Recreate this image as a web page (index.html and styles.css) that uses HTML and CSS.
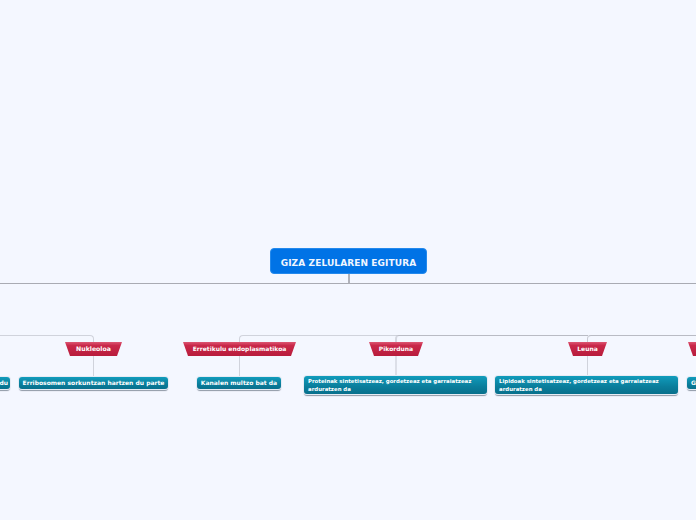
FILE: index.html
```html
<!DOCTYPE html>
<html lang="eu">
<head>
<meta charset="utf-8">
<title>Giza zelularen egitura</title>
<link rel="stylesheet" href="styles.css">
</head>
<body>
<main class="map">
  <div class="line trunk"></div>
  <div class="line stem"></div>
  <div class="line branch branch-left"></div>
  <div class="line branch branch-right-a"></div>
  <div class="line branch branch-right-b"></div>
  <div class="line branch branch-right-c"></div>
  <div class="line drop drop-1"></div>
  <div class="line drop drop-2"></div>
  <div class="line drop drop-3"></div>
  <div class="line drop drop-4"></div>

  <div class="root">GIZA ZELULAREN EGITURA</div>

  <div class="topic t-nukleoloa">Nukleoloa</div>
  <div class="topic t-erretikulu">Erretikulu endoplasmatikoa</div>
  <div class="topic t-pikorduna">Pikorduna</div>
  <div class="topic t-leuna">Leuna</div>
  <div class="topic t-edge"></div>

  <div class="note n-du">du</div>
  <div class="note n-erribo">Erribosomen sorkuntzan hartzen du parte</div>
  <div class="note n-kanalen">Kanalen multzo bat da</div>
  <div class="note wide n-proteinak">Proteinak sintetisatzeaz, gordetzeaz eta garraiatzeaz arduratzen da</div>
  <div class="note wide n-lipidoak">Lipidoak sintetisatzeaz, gordetzeaz eta garraiatzeaz arduratzen da</div>
  <div class="note n-edge">G</div>
</main>
</body>
</html>
```
FILE: styles.css
```css
html, body {
  margin: 0;
  padding: 0;
  width: 696px;
  height: 520px;
  overflow: hidden;
  background: #f4f7ff;
}
.map {
  position: relative;
  width: 696px;
  height: 520px;
  overflow: hidden;
  font-family: "DejaVu Sans", sans-serif;
  font-weight: 700;
}
.line { position: absolute; box-sizing: border-box; }
.trunk { left: 0; top: 283px; width: 696px; height: 1px; background: #a9abb3; }
.stem { left: 348px; top: 274px; width: 2px; height: 9px; background: #b0b2ba; }
.branch { top: 335px; height: 10px; border-top: 1px solid #d0d3dc; }
.branch-left { left: -10px; width: 104px; border-right: 1px solid #d0d3dc; border-top-right-radius: 4px; }
.branch-right-a { left: 239px; width: 158px; border-left: 1px solid #d0d3dc; border-top-left-radius: 4px; }
.branch-right-b { left: 395px; width: 193px; border-left: 2px solid #d4d7e0; border-top: 1px solid #b9bbc4; border-top-left-radius: 4px; }
.branch-right-c { left: 587px; width: 120px; border-left: 1px solid #c8cad3; border-top: 1px solid #b9bbc4; border-top-left-radius: 4px; }
.drop { width: 1px; top: 355px; height: 22px; background: #d0d3dc; }
.drop-1 { left: 93px; }
.drop-2 { left: 239px; }
.drop-3 { left: 395px; width: 2px; background: #dcdfe8; }
.drop-4 { left: 587px; }

.root {
  position: absolute;
  left: 270px;
  top: 248px;
  width: 157px;
  height: 26px;
  box-sizing: border-box;
  padding-top: 3px;
  display: flex;
  align-items: center;
  justify-content: center;
  background: #0073e6;
  border: 1px solid #2389ec;
  border-radius: 4px;
  color: #f0f6ff;
  font-size: 9px;
  letter-spacing: 0.1px;
  white-space: nowrap;
}

.topic {
  position: absolute;
  top: 342px;
  height: 14px;
  box-sizing: border-box;
  padding-bottom: 1px;
  display: flex;
  align-items: center;
  justify-content: center;
  background: linear-gradient(#dc5672, #c9284a 25%, #b81c3c);
  clip-path: polygon(0 0, 100% 0, calc(100% - 5px) 100%, 5px 100%);
  color: #fff;
  font-size: 6px;
  white-space: nowrap;
}
.t-nukleoloa { left: 65px; width: 57px; font-size: 6.2px; }
.t-erretikulu { left: 183px; width: 113px; }
.t-pikorduna { left: 369px; width: 54px; }
.t-leuna { left: 568px; width: 39px; }
.t-edge { left: 688px; width: 40px; }

.note {
  position: absolute;
  top: 377px;
  height: 12px;
  box-sizing: border-box;
  padding: 0 4px 1px;
  display: flex;
  align-items: center;
  background: linear-gradient(#119cbc, #0a7d9b 60%, #08708c);
  border-radius: 3px;
  box-shadow: 0 0 0 1px #e6ebf4, 0 2px 1px #8f98a6;
  color: #fff;
  font-size: 6px;
  white-space: nowrap;
}
.note.wide {
  top: 376px;
  height: 18px;
  font-size: 5.4px;
  line-height: 8px;
  white-space: normal;
  width: 183px;
}
.n-du { left: -20px; width: 30px; justify-content: flex-end; padding: 0 2px 1px; }
.n-erribo { left: 19px; width: 149px; justify-content: center; padding: 0 0 1px; }
.n-kanalen { left: 197px; width: 84px; justify-content: center; padding: 0 0 1px; }
.n-proteinak { left: 304px; }
.n-lipidoak { left: 495px; }
.n-edge { left: 687px; width: 40px; }
```
